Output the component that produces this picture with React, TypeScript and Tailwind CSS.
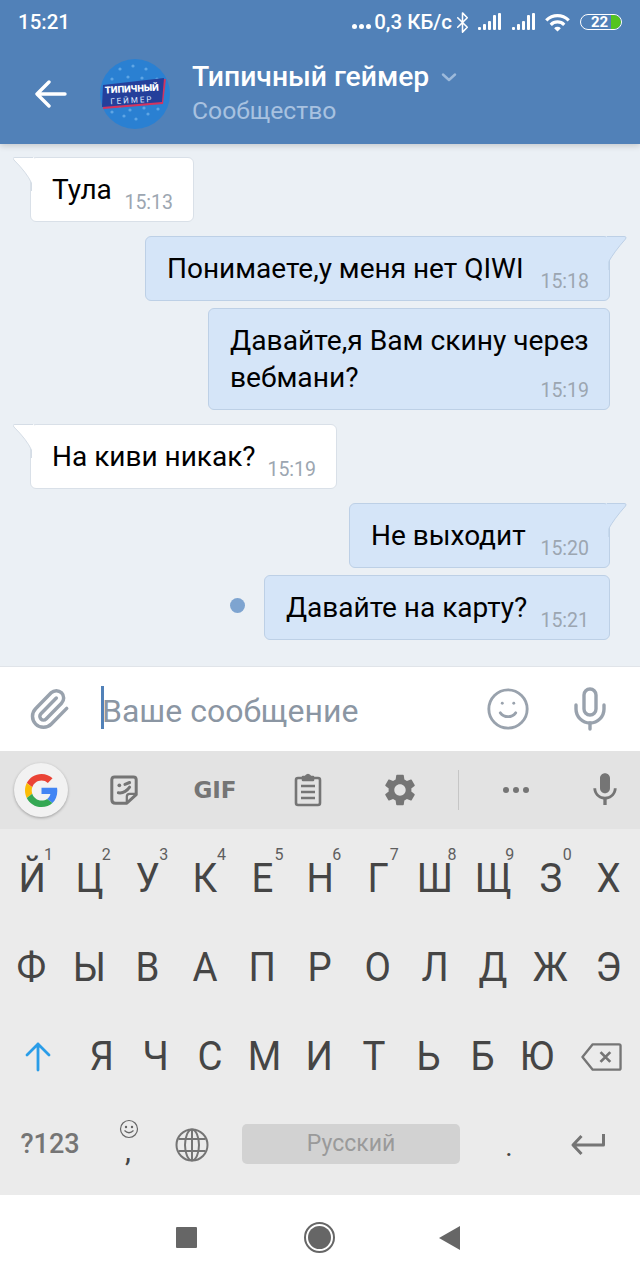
import React from "react";
import { Bluetooth, Smile, Mic, Paperclip } from "lucide-react";
import { MdSettings, MdWifi, MdMic } from "react-icons/md";

const Signal = () => (
  <svg width="25" height="20" viewBox="0 0 25 20" fill="#fff">
    <rect x="0" y="15" width="3" height="3" rx="1" />
    <rect x="5" y="12" width="3" height="6" rx="1" />
    <rect x="10" y="9" width="3" height="9" rx="1" />
    <rect x="15" y="3" width="3" height="15" rx="1" />
    <rect x="20" y="1" width="3" height="17" rx="1" />
  </svg>
);

const Avatar = () => (
  <svg width="70" height="70" viewBox="0 0 70 70" className="shrink-0">
    <circle cx="35" cy="35" r="35" fill="#2a80d2" />
    {[[20,10],[33,7],[46,10],[12,20],[28,18],[42,19],[57,20],[12,53],[24,57],[36,60],[48,55],[58,50],[30,51],[44,49],[20,47]].map(([x, y], i) => (
      <circle key={i} cx={x} cy={y} r="1.6" fill="#5fa5e4" />
    ))}
    <polygon points="4,27 66,20 63,45 3,50" fill="#d3345f" />
    <polygon points="3,26 64,19 62,43 2,48" fill="#243f9b" />
    <text x="32" y="33" textAnchor="middle" fill="#fff" fontSize="9.5" fontWeight="900" fontFamily="Roboto, sans-serif" transform="rotate(-3 32 33)">ТИПИЧНЫЙ</text>
    <text x="32" y="44" textAnchor="middle" fill="#dfe8ff" fontSize="8" letterSpacing="2" fontFamily="Roboto, sans-serif" transform="rotate(-3 32 44)">ГЕЙМЕР</text>
  </svg>
);

const TailLeft = () => (
  <svg width="21" height="34" viewBox="0 0 21 34" className="absolute left-[-18px] top-[-1px]">
    <path d="M20 0.5 L2 0.5 Q-1 0.5 1 3 Q14 16 18.5 26 L18.5 34 L21 34 L21 0.5 Z" fill="#ffffff" />
    <path d="M20 0.5 L2 0.5 Q-1 0.5 1 3 Q14 16 18.5 26 L18.5 34" fill="none" stroke="#d5dde6" strokeWidth="1" />
    <rect x="19" y="1" width="3" height="33" fill="#ffffff" />
  </svg>
);

const TailRight = () => (
  <svg width="21" height="34" viewBox="0 0 21 34" className="absolute right-[-18px] top-[-1px]">
    <path d="M1 0.5 L18 0.5 Q21 0.5 19.5 3 Q8 16 2.5 26 L2.5 34 L0 34 L0 0.5 Z" fill="#d5e5f8" />
    <path d="M1 0.5 L18 0.5 Q21 0.5 19.5 3 Q8 16 2.5 26 L2.5 34" fill="none" stroke="#bdd0e6" strokeWidth="1" />
    <rect x="0" y="1" width="2.4" height="33" fill="#d5e5f8" />
  </svg>
);

function Bubble({ out, tail, time, children, mt, w }: { out?: boolean; tail?: boolean; time: string; children: React.ReactNode; mt: string; w: string }) {
  return (
    <div className={`relative flex items-end justify-between h-[65px] pl-[21px] pr-[20px] pb-[9px] rounded-[6px] border ${w} ${mt} ${out ? "self-end bg-[#d5e5f8] border-[#bdd0e6]" : "self-start bg-white border-[#d9e0e8]"}`}>
      {tail && (out ? <TailRight /> : <TailLeft />)}
      <span className="text-[28px] leading-[37px] text-[#000] mb-[4px] whitespace-nowrap">{children}</span>
      <span className="text-[19.5px] leading-[24px] text-[#9ca6b1] mb-[-3px]">{time}</span>
    </div>
  );
}

const G = () => (
  <svg width="33" height="33" viewBox="0 0 48 48">
    <path fill="#EA4335" d="M24 9.5c3.54 0 6.71 1.22 9.21 3.6l6.85-6.85C35.9 2.38 30.47 0 24 0 14.62 0 6.51 5.38 2.56 13.22l7.98 6.19C12.43 13.72 17.74 9.5 24 9.5z" />
    <path fill="#4285F4" d="M46.98 24.55c0-1.57-.15-3.09-.38-4.55H24v9.02h12.94c-.58 2.96-2.26 5.48-4.78 7.18l7.73 6c4.51-4.18 7.09-10.36 7.09-17.65z" />
    <path fill="#FBBC05" d="M10.53 28.59c-.48-1.45-.76-2.99-.76-4.59s.27-3.14.76-4.59l-7.98-6.19C.92 16.46 0 20.12 0 24c0 3.88.92 7.54 2.56 10.78l7.97-6.19z" />
    <path fill="#34A853" d="M24 48c6.48 0 11.93-2.13 15.89-5.81l-7.73-6c-2.15 1.45-4.92 2.3-8.16 2.3-6.26 0-11.57-4.22-13.47-9.91l-7.98 6.19C6.51 42.62 14.62 48 24 48z" />
  </svg>
);

const Sticker = () => (
  <svg width="30" height="32" viewBox="0 0 32 34" fill="none" stroke="#757575" strokeWidth="3.2" strokeLinejoin="round">
    <path d="M6 3 H26 Q29 3 29 6 V22 L19 31 H7 Q3 31 3 27 V6 Q3 3 6 3 Z" />
    <path d="M29 21 H22 Q19 21 19 24 V31" strokeWidth="2.4" />
    <path d="M10 20 Q17 21 22 14" strokeLinecap="round" />
    <circle cx="11" cy="12" r="2" fill="#757575" stroke="none" />
    <path d="M17 11 L22 9" strokeLinecap="round" />
  </svg>
);

const Clipboard = () => (
  <svg width="28" height="34" viewBox="0 0 28 34" fill="none" stroke="#757575" strokeWidth="2.6" strokeLinejoin="round">
    <rect x="2" y="5" width="24" height="27" rx="2" />
    <path d="M9 7 V4 H11.5 Q14 0 16.5 4 H19 V7 Z" fill="#757575" />
    <path d="M7 13 H21 M7 19 H21 M7 25 H21" />
  </svg>
);

const GlobeIcon = () => (
  <svg width="34" height="34" viewBox="0 0 34 34" fill="none" stroke="#757575" strokeWidth="2">
    <circle cx="17" cy="17" r="15.5" />
    <ellipse cx="17" cy="17" rx="7" ry="15.5" />
    <path d="M17 1.5 V32.5 M3.5 11 H30.5 M3.5 23 H30.5" />
  </svg>
);

const Key = ({ c, n, w }: { c: string; n?: string; w?: boolean }) => (
  <div className={`relative flex items-center justify-center ${w ? "w-[54.5px]" : "flex-1"}`}>
    <span className="text-[40px] leading-none text-[#454545] scale-x-[0.96]">{c}</span>
    {n && <span className="absolute left-[41px] top-[13px] text-[16px] leading-none text-[#5e5e5e]">{n}</span>}
  </div>
);

export default function App() {
  return (
    <div className="w-[640px] h-[1280px] flex flex-col overflow-hidden bg-white font-['Roboto',sans-serif]">
      <header className="relative z-10 h-[144px] shrink-0 bg-[#5181b8] text-white shadow-[0_2px_6px_rgba(0,0,0,0.16)]">
        <div className="h-[44px] flex items-center pl-[18px] pr-[18px]">
          <span className="text-[20.5px] font-medium">15:21</span>
          <div className="ml-auto flex items-center">
            <div className="flex items-center gap-[2px] mt-[8px] mr-[3px]">
              <span className="w-[5px] h-[5px] rounded-full bg-white" />
              <span className="w-[5px] h-[5px] rounded-full bg-white" />
              <span className="w-[5px] h-[5px] rounded-full bg-white" />
            </div>
            <span className="text-[20.5px] font-medium">0,3 КБ/с</span>
            <Bluetooth size={23} strokeWidth={1.6} className="ml-[-1px]" />
            <span className="ml-[4px]"><Signal /></span>
            <span className="ml-[9px]"><Signal /></span>
            <MdWifi size={27} className="ml-[7px]" />
            <div className="relative ml-[9px] w-[42px] h-[16px] rounded-full border-[1.5px] border-white flex items-center overflow-hidden">
              <span className="absolute left-[10px] text-[15px] leading-none font-bold">22</span>
              <span className="absolute right-0 top-0 bottom-0 w-[10px] rounded-r-full bg-[#54c41f]" />
            </div>
          </div>
        </div>
        <div className="h-[100px] flex items-center">
          <svg width="32" height="28" viewBox="0 0 32 28" className="ml-[35px] shrink-0" fill="none" stroke="#fff" strokeWidth="3.4" strokeLinecap="round" strokeLinejoin="round">
            <path d="M30 14 H3 M14 2 L2 14 L14 26" />
          </svg>
          <div className="ml-[33px] mt-[-1px]"><Avatar /></div>
          <div className="ml-[22px] mt-[-3px]">
            <div className="flex items-center">
              <span className="text-[28.3px] leading-[36px] font-medium">Типичный геймер</span>
              <svg width="16" height="9" viewBox="0 0 16 9" className="ml-[12px]" fill="none" stroke="#9dbadb" strokeWidth="2.4" strokeLinecap="round" strokeLinejoin="round">
                <path d="M2 1.5 L8 7 L14 1.5" />
              </svg>
            </div>
            <div className="text-[24.7px] leading-[30px] mt-[1px] text-[#a8c2e0]">Сообщество</div>
          </div>
        </div>
      </header>

      <main className="h-[523px] shrink-0 bg-[#ebf0f5] border-b border-[#e0e4e9] flex flex-col px-[30px] pt-[13px]">
        <Bubble tail time="15:13" mt="mt-0" w="w-[164px]">Тула</Bubble>
        <Bubble out tail time="15:18" mt="mt-[14px]" w="w-[465px]">Понимаете,у меня нет QIWI</Bubble>
        <div className="relative self-end w-[402px] h-[102px] mt-[7px] pl-[21px] pr-[20px] pt-[13px] rounded-[6px] border bg-[#d5e5f8] border-[#bdd0e6]">
          <div className="text-[28.2px] leading-[37px] text-[#000] whitespace-nowrap">Давайте,я Вам скину через<br />вебмани?</div>
          <div className="text-[19.5px] leading-[24px] text-[#9ca6b1] text-right mt-[-17px]">15:19</div>
        </div>
        <Bubble tail time="15:19" mt="mt-[14px]" w="w-[307px]">На киви никак?</Bubble>
        <Bubble out tail time="15:20" mt="mt-[14px]" w="w-[261px]">Не выходит</Bubble>
        <div className="self-end flex items-center mt-[7px]">
          <span className="w-[15px] h-[15px] rounded-full bg-[#7ea4d0] mr-[19px] mt-[-5px]" />
          <Bubble out time="15:21" mt="mt-0" w="w-[346px]">Давайте на карту?</Bubble>
        </div>
      </main>

      <section className="h-[84px] shrink-0 bg-white flex items-center">
        <Paperclip size={44} strokeWidth={1.9} color="#99a2ad" className="ml-[27px]" />
        <div className="relative ml-[30px] flex items-center">
          <span className="absolute left-0 top-[-4px] w-[3px] h-[43px] bg-[#5181b8]" />
          <span className="ml-[1px] mt-[3px] text-[32px] leading-[36px] text-[#8b96a3]">Ваше сообщение</span>
        </div>
        <Smile size={46} strokeWidth={1.5} color="#99a2ad" className="ml-auto mr-[35px]" />
        <Mic size={48} strokeWidth={1.7} color="#99a2ad" className="mr-[26px]" />
      </section>

      <section className="h-[78px] shrink-0 bg-[#e3e3e3] flex items-center pl-[14px]">
        <div className="w-[54px] h-[54px] rounded-full bg-[#f2f2f2] shadow-[0_1px_3px_rgba(0,0,0,0.3)] flex items-center justify-center shrink-0"><G /></div>
        <div className="ml-[10px] w-[92px] flex justify-center shrink-0"><Sticker /></div>
        <div className="w-[92px] pr-[2px] text-center shrink-0 text-[23px] leading-none font-black text-[#757575] font-['DejaVu_Sans',sans-serif]">GIF</div>
        <div className="w-[92px] flex justify-center shrink-0"><Clipboard /></div>
        <div className="w-[92px] flex justify-center shrink-0"><MdSettings size={38} color="#757575" /></div>
        <div className="ml-[12px] w-px h-[40px] bg-[#c6c6c6] shrink-0" />
        <div className="ml-[11px] w-[92px] flex justify-center gap-[4px] shrink-0">
          <span className="w-[6px] h-[6px] rounded-full bg-[#757575]" />
          <span className="w-[6px] h-[6px] rounded-full bg-[#757575]" />
          <span className="w-[6px] h-[6px] rounded-full bg-[#757575]" />
        </div>
        <div className="ml-[21px] w-[44px] flex justify-center shrink-0"><MdMic size={40} color="#757575" /></div>
      </section>

      <section className="h-[366px] shrink-0 bg-[#ebebeb] pt-[5px]">
        <div className="h-[89px] flex px-[3px]">
          {[["Й","1"],["Ц","2"],["У","3"],["К","4"],["Е","5"],["Н","6"],["Г","7"],["Ш","8"],["Щ","9"],["З","0"],["Х"]].map(([c, n]) => <Key key={c} c={c} n={n} />)}
        </div>
        <div className="h-[89px] flex px-[3px]">
          {"ФЫВАПРОЛДЖЭ".split("").map((c) => <Key key={c} c={c} />)}
        </div>
        <div className="h-[89px] flex items-stretch">
          <div className="w-[74px] flex items-center justify-center">
            <svg width="26" height="30" viewBox="0 0 26 30" fill="none" stroke="#2a9de8" strokeWidth="2.8" strokeLinecap="round" strokeLinejoin="round" className="ml-[2px]">
              <path d="M13 28 V2 M2 13 L13 2 L24 13" />
            </svg>
          </div>
          {"ЯЧСМИТЬБЮ".split("").map((c) => <Key key={c} c={c} w />)}
          <div className="flex-1 flex items-center justify-start pl-[16px]">
            <svg width="41" height="30" viewBox="0 0 42 30" fill="none" stroke="#757575" strokeWidth="2.4" strokeLinejoin="round">
              <path d="M12 2 H39 Q40.5 2 40.5 3.5 V26.5 Q40.5 28 39 28 H12 L1.5 15 Z" />
              <path d="M20 10 L30 20 M30 10 L20 20" strokeWidth="2.8" />
            </svg>
          </div>
        </div>
        <div className="h-[89px] flex items-center mt-[-1px]">
          <div className="w-[99px] pl-[1px] text-center text-[27px] font-medium text-[#757575]">?123</div>
          <div className="relative w-[58px] h-full flex items-center justify-center">
            <span className="text-[30px] leading-none text-[#444] mt-[12px]">,</span>
            <svg width="20" height="20" viewBox="0 0 20 20" className="absolute left-[20px] top-[19px]" fill="none" stroke="#666" strokeWidth="1.2">
              <circle cx="10" cy="10" r="8.5" />
              <path d="M5.5 11.5 Q10 16 14.5 11.5" />
              <circle cx="7" cy="8" r="0.6" fill="#666" />
              <circle cx="13" cy="8" r="0.6" fill="#666" />
            </svg>
          </div>
          <div className="w-[69px] flex justify-center"><GlobeIcon /></div>
          <div className="ml-[16px] w-[218px] h-[40px] mt-[-1px] rounded-[5px] bg-[#d2d2d2] flex items-center justify-center text-[23px] text-[#9a9a9a]">Русский</div>
          <div className="w-[98px] text-center text-[28px] leading-none text-[#444] mt-[4px]">.</div>
          <svg width="36" height="26" viewBox="0 0 36 26" fill="none" stroke="#757575" strokeWidth="3" strokeLinejoin="round" className="ml-[12px]">
            <path d="M33.5 2 V13 H3 M11.5 4 L3 13 L11.5 22" />
          </svg>
        </div>
      </section>

      <nav className="flex-1 bg-white flex items-center justify-center pr-[4px]">
        <span className="w-[21px] h-[21px] rounded-[1px] bg-[#666]" />
        <span className="ml-[107px] w-[31px] h-[31px] rounded-full border-[2px] border-[#666] flex items-center justify-center">
          <span className="w-[23px] h-[23px] rounded-full bg-[#666]" />
        </span>
        <svg width="21" height="24" viewBox="0 0 21 24" className="ml-[104px]"><path d="M21 0 V24 L0 12 Z" fill="#666" /></svg>
      </nav>
    </div>
  );
}
